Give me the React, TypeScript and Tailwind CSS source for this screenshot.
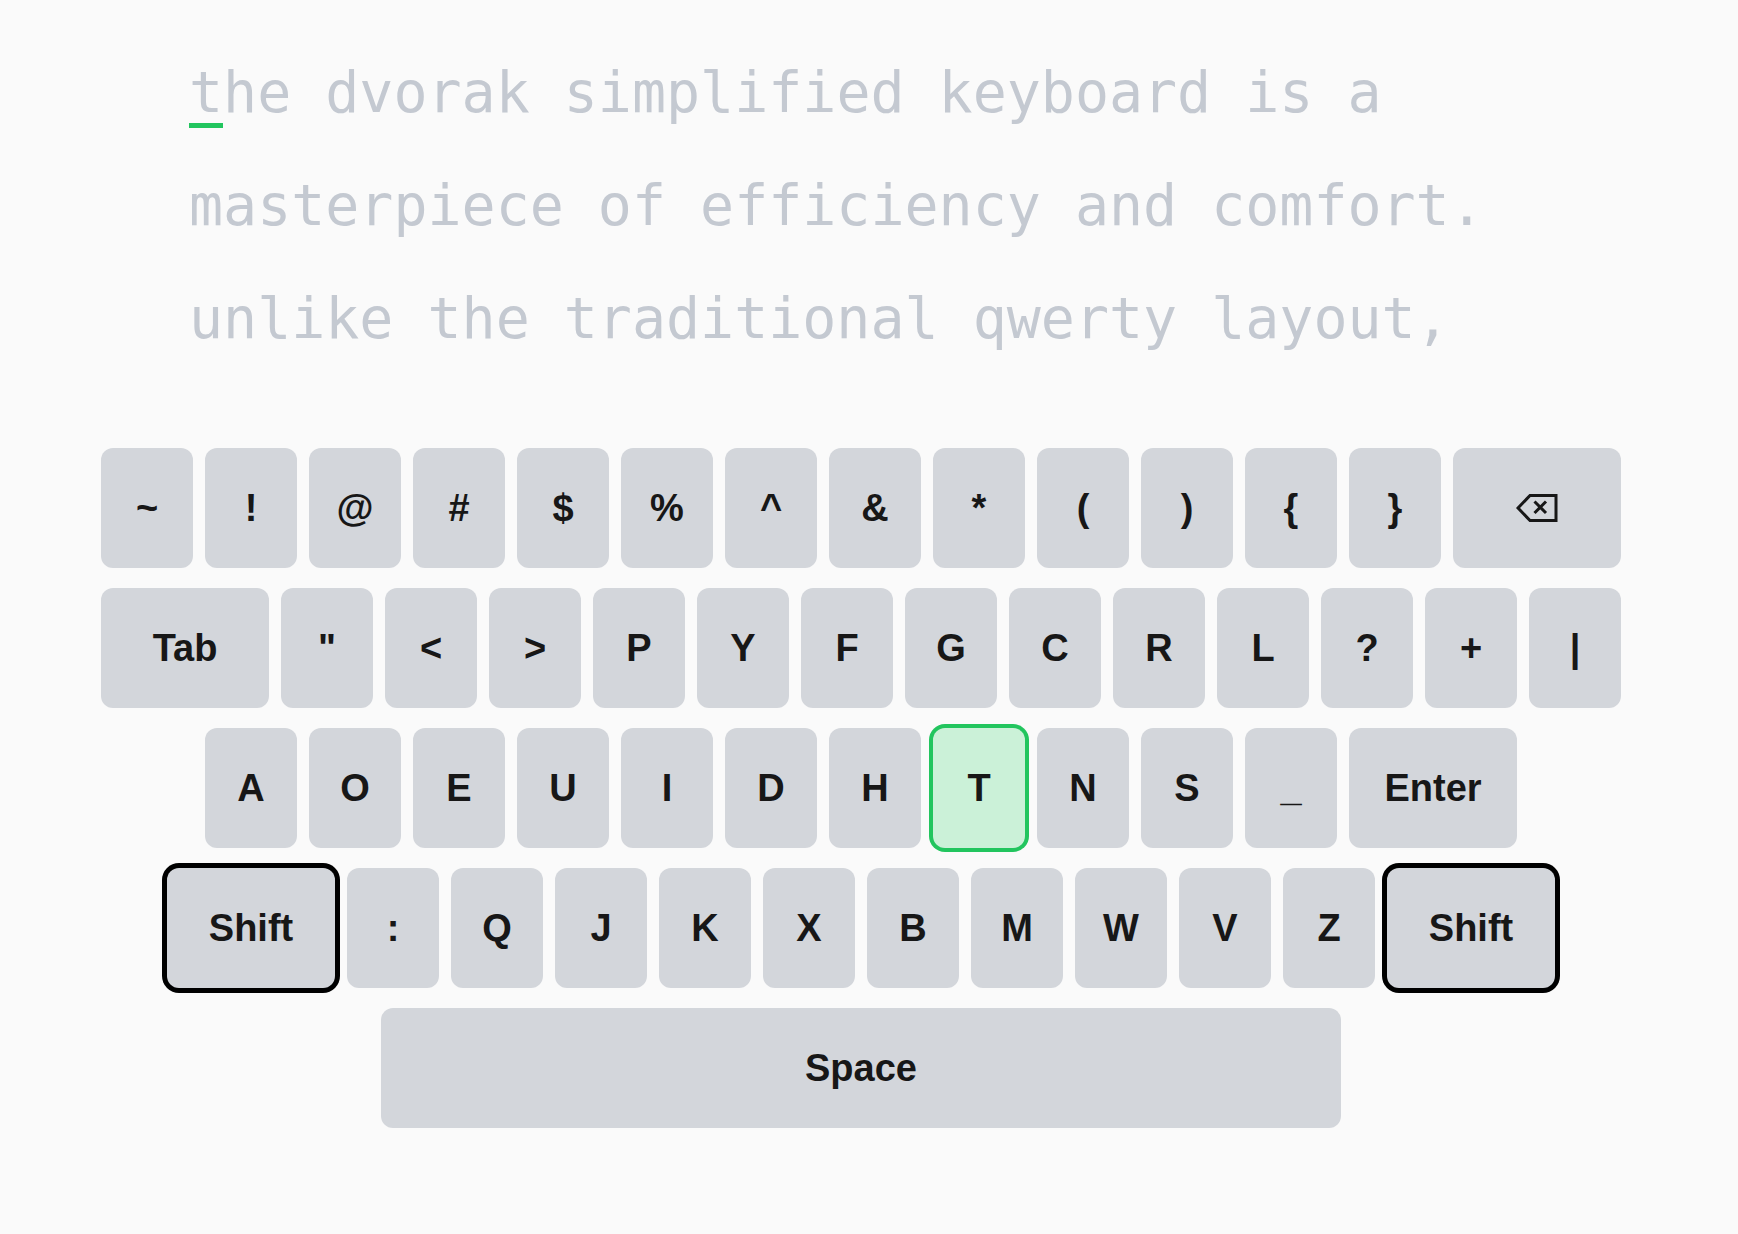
import React from "react";

type KeyDef = { label: string; wide?: boolean; state?: "active" | "held" };

const ROWS: KeyDef[][] = [
  [
    ..."~!@#$%^&*(){}".split("").map((c) => ({ label: c })),
    { label: "Backspace", wide: true },
  ],
  [
    { label: "Tab", wide: true },
    ...'"<>PYFGCRL?+|'.split("").map((c) => ({ label: c })),
  ],
  [
    ..."AOEUIDH".split("").map((c) => ({ label: c })),
    { label: "T", state: "active" as const },
    ..."NS_".split("").map((c) => ({ label: c })),
    { label: "Enter", wide: true },
  ],
  [
    { label: "Shift", wide: true, state: "held" as const },
    ...":QJKXBMWVZ".split("").map((c) => ({ label: c })),
    { label: "Shift", wide: true, state: "held" as const },
  ],
];

const LINES = [
  "the dvorak simplified keyboard is a",
  "masterpiece of efficiency and comfort.",
  "unlike the traditional qwerty layout,",
];

function BackspaceIcon() {
  return (
    <svg width="42" height="28" viewBox="0 0 42 28" fill="none" stroke="#171717" strokeWidth="3">
      <path d="M2 14 14 1.5h26v25H14Z" strokeLinejoin="miter" />
      <path d="M18.5 7.5 30 19M30 7.5 18.5 19" />
    </svg>
  );
}

function Key({ k }: { k: KeyDef }) {
  const base =
    "flex h-[120px] items-center justify-center rounded-xl text-[38px] font-bold text-[#171717]";
  const width = k.wide ? "w-[168px]" : "w-[92px]";
  const look =
    k.state === "active"
      ? "bg-[#cbf1d8] ring-4 ring-[#22c55e]"
      : k.state === "held"
        ? "bg-[#d3d6db] ring-[5px] ring-black"
        : "bg-[#d3d6db]";
  return (
    <div className={`${base} ${width} ${look}`}>
      {k.label === "Backspace" ? <BackspaceIcon /> : k.label}
    </div>
  );
}

export default function App() {
  return (
    <div
      className="min-h-[1234px] w-full bg-[#fafafa] pl-[101px] pt-[36px]"
      style={{ fontFamily: '"Liberation Sans", Arial, sans-serif' }}
    >
      <div
        className="ml-[88px] text-[56.6px] leading-[113px] text-[#c4c9d1]"
        style={{ fontFamily: '"DejaVu Sans Mono", monospace' }}
      >
        {LINES.map((line, i) => (
          <div key={i} className="whitespace-pre">
            {i === 0 ? (
              <>
                <span className="relative">
                  t
                  <span className="absolute bottom-[-3px] left-0 h-[5px] w-full bg-[#22c55e]" />
                </span>
                {line.slice(1)}
              </>
            ) : (
              line
            )}
          </div>
        ))}
      </div>

      <div className="mt-[73px] flex w-[1520px] flex-col items-center gap-5">
        {ROWS.map((row, i) => (
          <div key={i} className="flex gap-3">
            {row.map((k, j) => (
              <Key key={j} k={k} />
            ))}
          </div>
        ))}
        <div className="flex h-[120px] w-[960px] items-center justify-center rounded-xl bg-[#d3d6db] text-[38px] font-bold text-[#171717]">
          Space
        </div>
      </div>
    </div>
  );
}
